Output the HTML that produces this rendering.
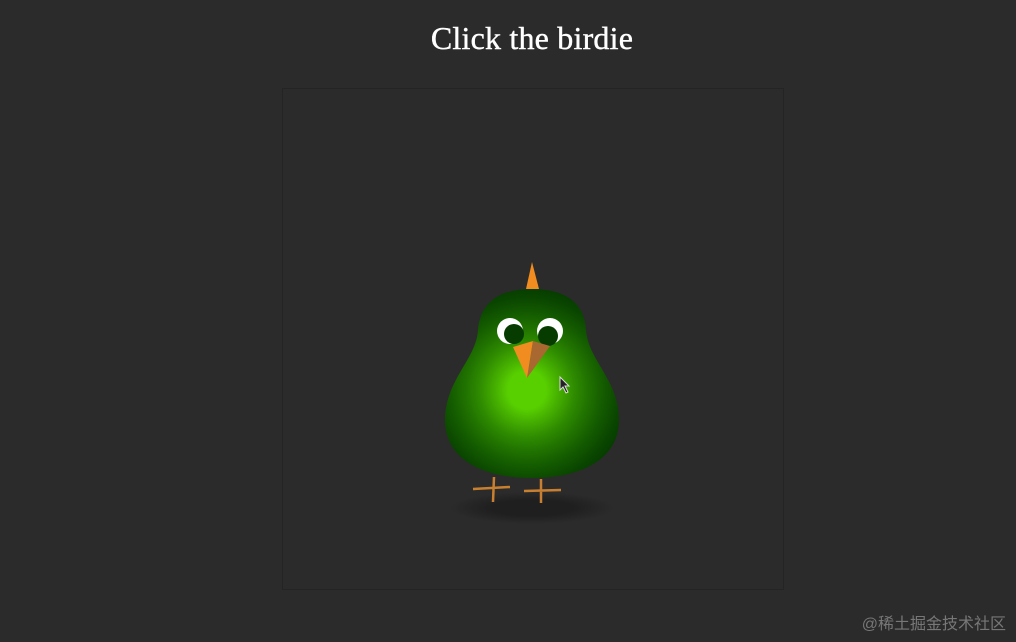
<!DOCTYPE html>
<html><head><style>
html,body{margin:0;padding:0;background:#2b2b2b;width:1016px;height:642px;overflow:hidden}
h1{position:absolute;top:20px;left:24px;width:1016px;text-align:center;margin:0;font:32px "Liberation Serif",serif;color:#fff;letter-spacing:0.2px;-webkit-text-stroke:0.4px #fff}
.box{position:absolute;left:282px;top:88px;width:500px;height:500px;border:1px solid #242424}
.wm{position:absolute;right:10px;bottom:8px;font:16px "Liberation Sans","Noto Sans CJK SC",sans-serif;color:#777}
svg{position:absolute;left:0;top:0}
</style></head><body>
<h1>Click the birdie</h1>
<div class="box"></div>
<svg width="1016" height="642">
<defs>
<radialGradient id="g" cx="527" cy="390" r="105" gradientUnits="userSpaceOnUse">
<stop offset="0.18" stop-color="#58d000"/><stop offset="0.3" stop-color="#46b000"/><stop offset="0.45" stop-color="#2f8c00"/><stop offset="0.6" stop-color="#1f7000"/><stop offset="0.75" stop-color="#125800"/><stop offset="0.88" stop-color="#0a4600"/><stop offset="1" stop-color="#053a00"/>
</radialGradient>
<radialGradient id="s" cx="0.5" cy="0.5" r="0.5"><stop offset="0.5" stop-color="#1f1f1f"/><stop offset="1" stop-color="#2b2b2b"/></radialGradient>
</defs>
<ellipse cx="532" cy="508" rx="82" ry="16" fill="url(#s)"/>
<path d="M532,262 L539,289 L526,289 Z" fill="#f08c20"/>
<path d="M532,289 C568,289 585,305 586,330 C588,360 619,380 619,420 C619,460 580,478 532,478 C484,478 445,460 445,420 C445,380 476,360 478,330 C480,305 496,289 532,289 Z" fill="url(#g)"/>
<g stroke="#c88030" stroke-width="2.5" fill="none">
<path d="M473,489 L510,487 M494,477 L493,502"/>
<path d="M524,491 L561,490 M541,479 L541,503"/>
</g>
<circle cx="510" cy="331" r="13" fill="#fff"/><circle cx="514" cy="334" r="10" fill="#063c00"/>
<circle cx="550" cy="331" r="13" fill="#fff"/><circle cx="548" cy="336" r="10" fill="#063c00"/>
<path d="M513,347 L533,341 L527,378 Z" fill="#f08c20"/>
<path d="M533,341 L550,346 L527,378 Z" fill="#a86830"/>
<path d="M560,377 L560,390 L563,387 L566,393 L568,392 L565,386 L569,386 Z" fill="#222" stroke="#ddd" stroke-width="1"/>
</svg>
<div class="wm">@稀土掘金技术社区</div>
</body></html>
